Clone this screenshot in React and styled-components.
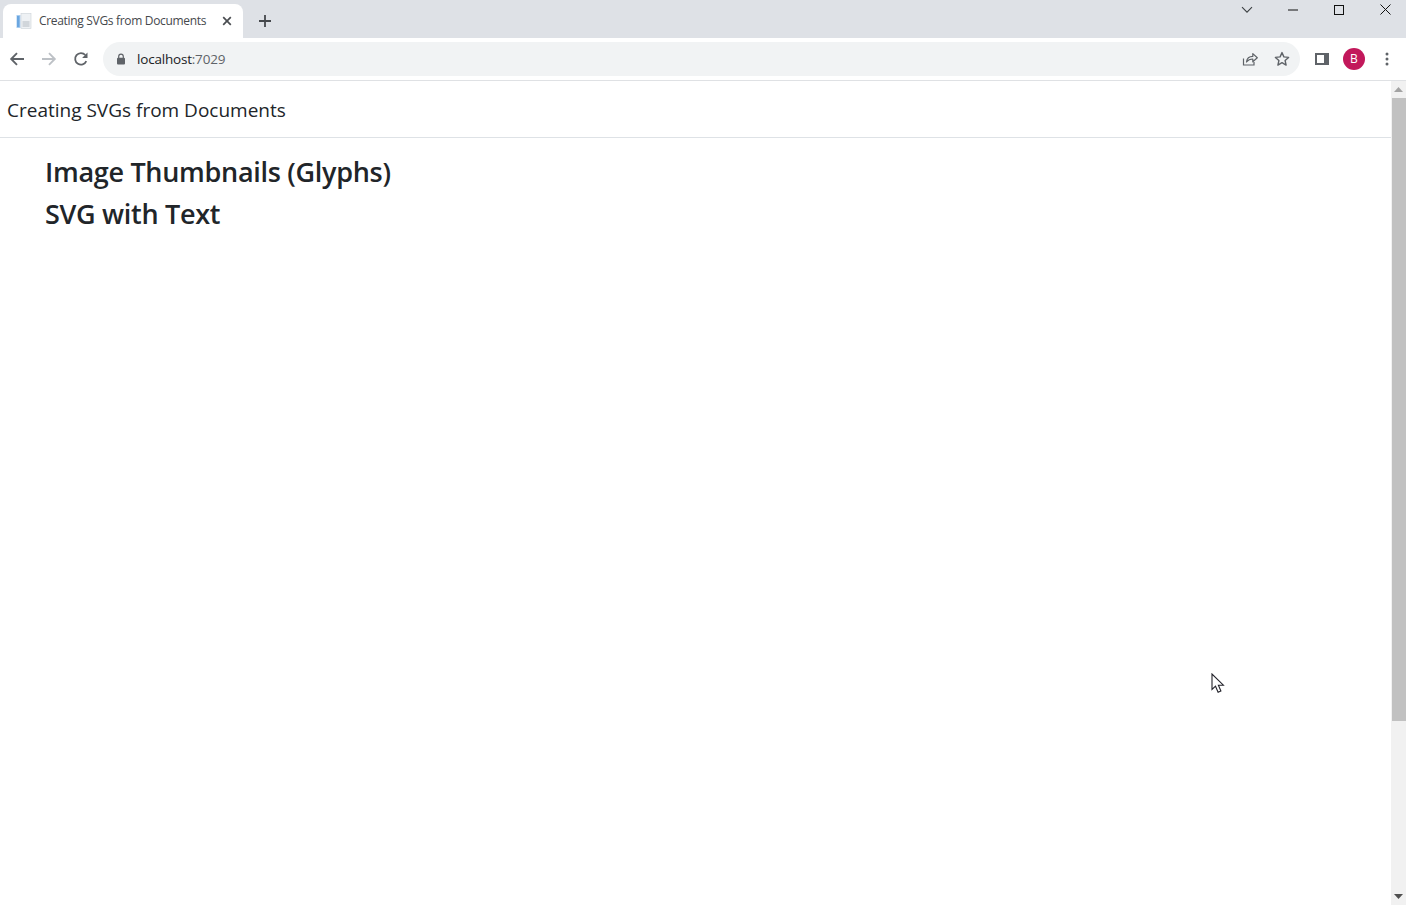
import React from "react";
import styled, { createGlobalStyle } from "styled-components";

const UI_FONT = `"Open Sans", "Noto Sans", "Liberation Sans", sans-serif`;

const GlobalStyle = createGlobalStyle`
  html, body {
    margin: 0;
    padding: 0;
    height: 100%;
    overflow: hidden;
    background: #fff;
  }
  * { box-sizing: border-box; }
`;

const App = () => {
  return (
    <Window>
      <GlobalStyle />
      <TabStrip>
        <Tab>
          <Favicon viewBox="0 0 16 16">
            <rect x="0.5" y="2" width="4" height="13" fill="#a9cdf0" />
            <rect x="5" y="0.5" width="10" height="15" fill="#eef1f4" stroke="#ccd2d8" strokeWidth="0.6" />
            <path d="M6.5 9h7M6.5 11h7M6.5 13h7" stroke="#b4bbc2" strokeWidth="1" />
            <rect x="1" y="3" width="2.5" height="11" fill="#6aa6e0" />
          </Favicon>
          <TabTitle>Creating SVGs from Documents</TabTitle>
          <IconSlot $size={10}>
            <svg width="10" height="10" viewBox="0 0 10 10">
              <path d="M1.2 1.2l7.6 7.6M8.8 1.2L1.2 8.8" stroke="#4a4d51" strokeWidth="1.7" />
            </svg>
          </IconSlot>
        </Tab>
        <NewTab>
          <svg width="14" height="14" viewBox="0 0 14 14">
            <path d="M7 1v12M1 7h12" stroke="#45484c" strokeWidth="1.8" />
          </svg>
        </NewTab>
        <StripSpacer />
        <WindowControls>
          <WindowButton>
            <svg width="12" height="8" viewBox="0 0 12 8">
              <path d="M1 1.2l5 5 5-5" fill="none" stroke="#3c4043" strokeWidth="1.1" />
            </svg>
          </WindowButton>
          <WindowButton>
            <svg width="10" height="2" viewBox="0 0 10 2">
              <path d="M0 1h10" stroke="#111" strokeWidth="1" />
            </svg>
          </WindowButton>
          <WindowButton>
            <svg width="10" height="10" viewBox="0 0 10 10">
              <rect x="0.5" y="0.5" width="9" height="9" fill="none" stroke="#111" strokeWidth="1" />
            </svg>
          </WindowButton>
          <WindowButton>
            <svg width="11" height="11" viewBox="0 0 11 11">
              <path d="M0.5 0.5l10 10M10.5 0.5l-10 10" stroke="#111" strokeWidth="1" />
            </svg>
          </WindowButton>
        </WindowControls>
      </TabStrip>

      <Toolbar>
        <NavButton>
          <svg width="16" height="16" viewBox="0 0 16 16">
            <path d="M15 8H2.5M8 2.2L2.2 8 8 13.8" fill="none" stroke="#5f6368" strokeWidth="1.9" />
          </svg>
        </NavButton>
        <NavButton>
          <svg width="16" height="16" viewBox="0 0 16 16">
            <path d="M1 8h12.5M8 2.2L13.8 8 8 13.8" fill="none" stroke="#bdc1c6" strokeWidth="1.9" />
          </svg>
        </NavButton>
        <NavButton>
          <svg width="16" height="16" viewBox="0 0 16 16">
            <path d="M13.3 10.2A5.8 5.8 0 1 1 12.3 4" fill="none" stroke="#5f6368" strokeWidth="1.8" />
            <path d="M14.5 1.5v5.4H9.1z" fill="#5f6368" />
          </svg>
        </NavButton>
        <Omnibox>
          <svg width="10" height="12" viewBox="0 0 10 12">
            <path d="M2.7 5V3.4a2.3 2.3 0 0 1 4.6 0V5" fill="none" stroke="#5f6368" strokeWidth="1.2" />
            <rect x="1" y="4.8" width="8" height="6.6" rx="1" fill="#5f6368" />
          </svg>
          <Url>
            localhost<UrlPort>:7029</UrlPort>
          </Url>
          <OmniboxActions>
            <svg width="16" height="16" viewBox="0 0 16 16">
              <path d="M1.5 7.5v6.5h10.5v-3" fill="none" stroke="#5f6368" strokeWidth="1.2" />
              <path d="M4.5 11c.4-3.4 2.8-5.6 6.3-5.6V2.6L15.3 6.8l-4.5 4V8c-2.7 0-4.7.9-6.3 3z" fill="none" stroke="#5f6368" strokeWidth="1.2" strokeLinejoin="round" />
            </svg>
            <svg width="16" height="16" viewBox="0 0 16 16">
              <path d="M8 1.6l1.9 4.3 4.7.5-3.5 3.1 1 4.6L8 11.7l-4.1 2.4 1-4.6L1.4 6.4l4.7-.5z" fill="none" stroke="#5f6368" strokeWidth="1.4" strokeLinejoin="round" />
            </svg>
          </OmniboxActions>
        </Omnibox>
        <ToolbarEnd>
          <svg width="14" height="12" viewBox="0 0 14 12">
            <rect x="1" y="1" width="12" height="10" fill="none" stroke="#5f6368" strokeWidth="2" />
            <rect x="9" y="1" width="4" height="10" fill="#5f6368" />
          </svg>
          <Avatar>B</Avatar>
          <svg width="4" height="14" viewBox="0 0 4 14">
            <circle cx="2" cy="2" r="1.5" fill="#5f6368" />
            <circle cx="2" cy="7" r="1.5" fill="#5f6368" />
            <circle cx="2" cy="12" r="1.5" fill="#5f6368" />
          </svg>
        </ToolbarEnd>
      </Toolbar>

      <Viewport>
        <Page>
          <PageHeader>Creating SVGs from Documents</PageHeader>
          <Main>
            <Heading>Image Thumbnails (Glyphs)</Heading>
            <Heading>SVG with Text</Heading>
          </Main>
        </Page>
        <Scrollbar>
          <ScrollArrow>
            <svg width="9" height="5" viewBox="0 0 9 5">
              <path d="M4.5 0L9 5H0z" fill="#a3a3a3" />
            </svg>
          </ScrollArrow>
          <ScrollThumb />
          <ScrollTrack />
          <ScrollArrow>
            <svg width="9" height="5" viewBox="0 0 9 5">
              <path d="M0 0h9L4.5 5z" fill="#505050" />
            </svg>
          </ScrollArrow>
        </Scrollbar>
        <Cursor width="14" height="21" viewBox="0 0 14 21">
          <path
            d="M1 1v15.5l3.5-3.3 2.6 6 2.8-1.2-2.500-5.800h5z"
            fill="#fff"
            stroke="#23232b"
            strokeWidth="1.1"
          />
        </Cursor>
      </Viewport>
    </Window>
  );
};

const Window = styled.div`
  display: flex;
  flex-direction: column;
  width: 1406px;
  height: 905px;
  overflow: hidden;
  background: #fff;
  font-family: ${UI_FONT};
`;

const TabStrip = styled.div`
  display: flex;
  align-items: flex-start;
  flex: 0 0 38px;
  padding: 4px 0 0 3px;
  background: #dee1e6;
`;

const Tab = styled.div`
  display: flex;
  align-items: center;
  width: 240px;
  height: 34px;
  padding: 0 11px 1px 13px;
  border-radius: 8px 8px 0 0;
  background: #fff;
`;

const Favicon = styled.svg`
  flex: 0 0 16px;
  width: 16px;
  height: 16px;
  margin-right: 7px;
`;

const TabTitle = styled.span`
  flex: 1;
  font-size: 12px;
  letter-spacing: -0.32px;
  color: #45484c;
  white-space: nowrap;
`;

const IconSlot = styled.span`
  display: flex;
  width: ${(props) => props.$size}px;
  height: ${(props) => props.$size}px;
`;

const NewTab = styled.div`
  display: flex;
  align-items: center;
  justify-content: center;
  width: 28px;
  height: 28px;
  margin: 3px 0 0 8px;
`;

const StripSpacer = styled.div`
  flex: 1;
`;

const WindowControls = styled.div`
  display: flex;
  margin: -5px -2px 0 0;
`;

const WindowButton = styled.div`
  display: flex;
  align-items: center;
  justify-content: center;
  width: 46px;
  height: 20px;
  padding-top: 1px;
`;

const Toolbar = styled.div`
  display: flex;
  align-items: center;
  flex: 0 0 43px;
  padding: 0 17px 1px 9px;
  background: #fff;
  border-bottom: 1px solid #dfe1e4;
`;

const NavButton = styled.div`
  display: flex;
  align-items: center;
  justify-content: center;
  width: 16px;
  height: 16px;
  margin-right: 16px;
`;

const Omnibox = styled.div`
  display: flex;
  align-items: center;
  flex: 0 0 1197px;
  height: 34px;
  margin-left: -2px;
  padding: 0 10px 0 13px;
  border-radius: 17px;
  background: #f1f3f4;
`;

const Url = styled.span`
  margin-left: 11px;
  font-size: 13.5px;
  letter-spacing: -0.2px;
  color: #202124;
`;

const UrlPort = styled.span`
  color: #5f6368;
`;

const OmniboxActions = styled.div`
  display: flex;
  align-items: center;
  gap: 16px;
  margin-left: auto;
`;

const ToolbarEnd = styled.div`
  display: flex;
  align-items: center;
  flex: 1;
  margin-left: 15px;
`;

const Avatar = styled.div`
  display: flex;
  align-items: center;
  justify-content: center;
  width: 22px;
  height: 22px;
  margin: 0 20px 0 14px;
  border-radius: 50%;
  background: #c2185b;
  color: #fff;
  font-size: 12px;
`;

const Viewport = styled.div`
  position: relative;
  display: flex;
  flex: 1;
  min-height: 0;
`;

const Page = styled.div`
  flex: 1;
  min-width: 0;
`;

const PageHeader = styled.header`
  height: 57px;
  padding: 14px 7px 0;
  border-bottom: 1px solid #dee2e6;
  font-size: 19px;
  line-height: 30px;
  color: #212529;
`;

const Main = styled.main`
  padding: 13px 45px 0;
`;

const Heading = styled.h3`
  margin: 0;
  font-size: 27px;
  font-weight: 600;
  line-height: 42px;
  letter-spacing: -0.3px;
  color: #212529;
`;

const Scrollbar = styled.div`
  display: flex;
  flex-direction: column;
  flex: 0 0 15px;
  background: #f1f1f1;
`;

const ScrollArrow = styled.div`
  display: flex;
  align-items: center;
  justify-content: center;
  flex: 0 0 17px;
`;

const ScrollThumb = styled.div`
  flex: 0 0 623px;
  margin-left: 1px;
  background: #c1c1c1;
`;

const ScrollTrack = styled.div`
  flex: 1;
`;

const Cursor = styled.svg`
  position: absolute;
  left: 1211px;
  top: 592px;
`;

export default App;
